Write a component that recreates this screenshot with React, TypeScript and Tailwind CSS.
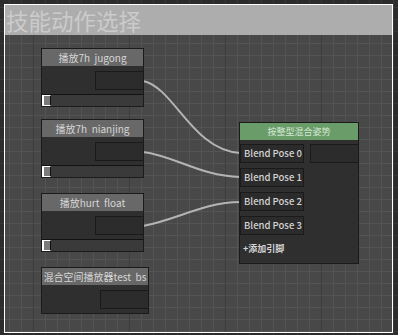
import React from 'react';

const cjk = "font-['Noto_Sans_CJK_SC',sans-serif]";

const posClass: Record<string, string> = {
  n1: 'left-[41px] top-[48px] w-[103px]',
  n2: 'left-[41px] top-[119px] w-[103px]',
  n3: 'left-[41px] top-[193px] w-[103px]',
  n4: 'left-[41px] top-[267px] w-[108px]',
};

const ClipNode: React.FC<{ title: string; pos: string; slider?: boolean }> = ({ title, pos, slider = true }) => (
  <div className={`absolute ${posClass[pos]} border border-[#1b1b1b] bg-[#2f2f2f] flex flex-col`}>
    <div className={`h-[17px] bg-[#686868] text-[#d6d6d6] text-[10px] leading-[17px] text-center whitespace-pre ${cjk}`}>
      {title}
    </div>
    <div className="h-[28px] flex justify-end items-start pt-[5px]">
      <div className="w-[49px] h-[19px] -mr-px border border-[#1a1a1a] bg-[#2c2c2c]" />
    </div>
    {slider && (
      <div className="h-[12px] border-t border-[#121212] bg-[#3a3a3a] flex items-stretch">
        <div className="w-[9px] border-l-2 border-t border-b border-r border-l-white border-t-white border-b-white border-r-[#111] bg-[#7a7a7a]" />
      </div>
    )}
  </div>
);

const PoseRow: React.FC<{ label: string; extra?: boolean }> = ({ label, extra }) => (
  <div className="flex items-start h-[19px]">
    <div className={`w-[64px] h-[19px] border border-[#1a1a1a] bg-[#2b2b2b] pl-[3px] text-[9.5px] leading-[17px] font-medium text-[#d4d4d4] whitespace-nowrap ${cjk}`}>
      {label}
    </div>
    {extra && <div className="ml-auto -mr-px w-[49px] h-[19px] border border-[#1a1a1a] bg-[#2c2c2c]" />}
  </div>
);

export default function App() {
  return (
    <div className="relative w-[398px] h-[335px] overflow-hidden bg-[#2c2c2c] p-[4px] [background-image:linear-gradient(to_right,#383838_1px,transparent_1px),linear-gradient(to_bottom,#383838_1px,transparent_1px)] [background-size:12px_12px] [background-position:9px_7px]">
      {/* group frame */}
      <div className="w-[389px] h-[329px] border border-white bg-[#484848] flex flex-col [background-image:linear-gradient(to_right,#3d3d3d_1px,transparent_1px),linear-gradient(to_right,#545454_1px,transparent_1px),linear-gradient(to_bottom,#545454_1px,transparent_1px)] [background-size:96px_96px,12px_12px,12px_12px] [background-position:28px_0px,4px_2px,4px_2px]">
        <div className={`h-[30px] bg-[#adadad] text-[#cbcbcb] text-[22.5px] leading-[30px] pl-[1px] ${cjk}`}>
          技能动作选择
        </div>
      </div>

      {/* links */}
      <svg className="absolute left-0 top-0" width="398" height="335" fill="none">
        <path d="M143 81 C174 87, 192 150, 240 153" stroke="#b4b4b4" strokeWidth="2" />
        <path d="M143 152 C175 156, 200 176, 240 177" stroke="#b4b4b4" strokeWidth="2" />
        <path d="M143 226 C176 220, 205 202, 240 202" stroke="#b4b4b4" strokeWidth="2" />
      </svg>

      <ClipNode pos="n1" title="播放7h  jugong" />
      <ClipNode pos="n2" title="播放7h  nianjing" />
      <ClipNode pos="n3" title="播放hurt  float" />
      <ClipNode pos="n4" title="混合空间播放器test  bs" slider={false} />

      {/* blend node */}
      <div className="absolute left-[239px] top-[122px] w-[120px] border border-[#1b1b1b] bg-[#2f2f2f] flex flex-col">
        <div className={`h-[17px] bg-[#6a9c69] text-[#d6e8d6] text-[9px] leading-[17px] text-center ${cjk}`}>
          按整型混合姿势
        </div>
        <div className="flex flex-col gap-[5px] pt-[4px]">
          <PoseRow label="Blend Pose 0" extra />
          <PoseRow label="Blend Pose 1" />
          <PoseRow label="Blend Pose 2" />
          <PoseRow label="Blend Pose 3" />
        </div>
        <div className={`mt-[8px] mb-[8px] pl-[3px] text-[9px] leading-[12px] font-bold text-[#d4d4d4] ${cjk}`}>
          +添加引脚
        </div>
      </div>
    </div>
  );
}
